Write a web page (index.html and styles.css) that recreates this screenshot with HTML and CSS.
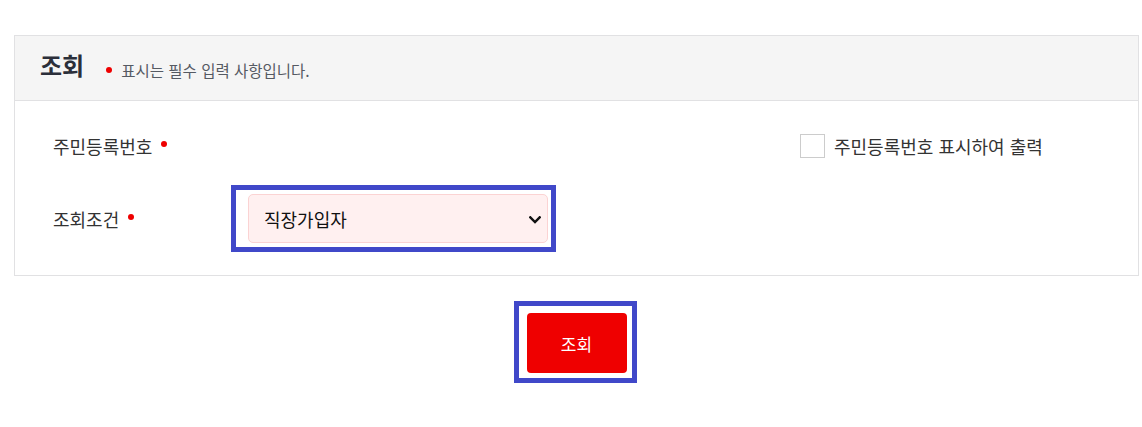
FILE: index.html
```html
<!DOCTYPE html>
<html lang="ko">
<head>
<meta charset="utf-8">
<title>조회</title>
<link rel="stylesheet" href="styles.css">
</head>
<body>
<div class="page">
  <section class="panel">
    <header class="panel-head">
      <h2 class="panel-title">조회</h2>
      <p class="panel-note"><span class="dot"></span>표시는 필수 입력 사항입니다.</p>
    </header>
    <div class="panel-body">
      <div class="row row-first">
        <div class="label">주민등록번호<span class="dot dot-label"></span></div>
        <div class="field"></div>
        <label class="check">
          <input type="checkbox" class="check-box">
          <span class="check-text">주민등록번호 표시하여 출력</span>
        </label>
      </div>
      <div class="row row-second">
        <div class="label">조회조건<span class="dot dot-label"></span></div>
        <div class="field">
          <div class="focus-box select-box">
            <div class="select-wrap">
              <select class="select">
                <option>직장가입자</option>
                <option>지역가입자</option>
              </select>
              <svg class="chevron" width="12" height="8" viewBox="0 0 12 8" aria-hidden="true">
                <path d="M1.3 1.3 L6 6 L10.7 1.3" fill="none" stroke="#111" stroke-width="2.4" stroke-linecap="square"/>
              </svg>
            </div>
          </div>
        </div>
      </div>
    </div>
  </section>
  <div class="actions">
    <div class="focus-box btn-box">
      <button type="button" class="btn">조회</button>
    </div>
  </div>
</div>
</body>
</html>
```

FILE: styles.css
```css
* { box-sizing: border-box; }

html, body {
  margin: 0;
  padding: 0;
  background: #ffffff;
}

body {
  font-family: "Noto Sans CJK KR", "Noto Sans", "Liberation Sans", sans-serif;
  color: #333333;
}

.page {
  padding: 35px 0 0 14px;
  width: 1139px;
}

.panel {
  border: 1px solid #e1e1e3;
  background: #ffffff;
}

.panel-head {
  display: flex;
  align-items: center;
  height: 65px;
  padding: 0 25px;
  background: #f5f5f5;
  border-bottom: 1px solid #e1e1e3;
}

.panel-title {
  margin: -6px 0 0 0;
  font-size: 24px;
  line-height: 30px;
  font-weight: 700;
  color: #2b2f3a;
}

.panel-note {
  display: flex;
  align-items: center;
  margin: 4px 0 0 22px;
  font-size: 15.5px;
  line-height: 20px;
  color: #555a63;
}

.dot {
  display: inline-block;
  width: 6px;
  height: 6px;
  border-radius: 50%;
  background: #ee0000;
  margin-right: 9px;
}

.panel-body {
  padding: 19px 0 23px 38px;
}

.row {
  display: grid;
  grid-template-columns: 178px 569px 1fr;
  align-items: center;
}

.row-first {
  height: 51px;
}

.row-second {
  margin-top: 14px;
}

.label {
  display: flex;
  align-items: center;
  font-size: 18px;
  line-height: 24px;
  color: #333333;
}

.dot-label {
  margin: -4px 0 0 9px;
}

.check {
  display: flex;
  align-items: center;
  gap: 9px;
  cursor: pointer;
}

.check-box {
  appearance: none;
  -webkit-appearance: none;
  width: 25px;
  height: 24px;
  margin: 0;
  border: 1px solid #cccccc;
  background: #ffffff;
}

.check-text {
  font-size: 18px;
  line-height: 24px;
  color: #333333;
}

.focus-box {
  border: 5px solid #4048c9;
  background: #ffffff;
}

.select-box {
  width: 325px;
  padding: 4px 3px 4px 12px;
}

.select-wrap {
  position: relative;
  width: 300px;
}

.select {
  display: block;
  appearance: none;
  -webkit-appearance: none;
  width: 300px;
  height: 49px;
  padding: 0 30px 0 15px;
  border: 1px solid #fbd3d3;
  border-radius: 5px;
  background-color: #fff0f0;
  font-family: "Noto Sans CJK KR", "Noto Sans", sans-serif;
  font-size: 18px;
  color: #111111;
}

.chevron {
  position: absolute;
  right: 7px;
  top: 22px;
  pointer-events: none;
}

.actions {
  display: flex;
  justify-content: center;
  padding-top: 25px;
}

.btn-box {
  padding: 7px 5px 5px 8px;
  margin-left: -3px;
}

.btn {
  display: block;
  width: 100px;
  height: 60px;
  border: 0;
  border-radius: 4px;
  background: #ef0000;
  color: #ffffff;
  font-family: "Noto Sans CJK KR", "Noto Sans", sans-serif;
  font-size: 17px;
  cursor: pointer;
}
```
